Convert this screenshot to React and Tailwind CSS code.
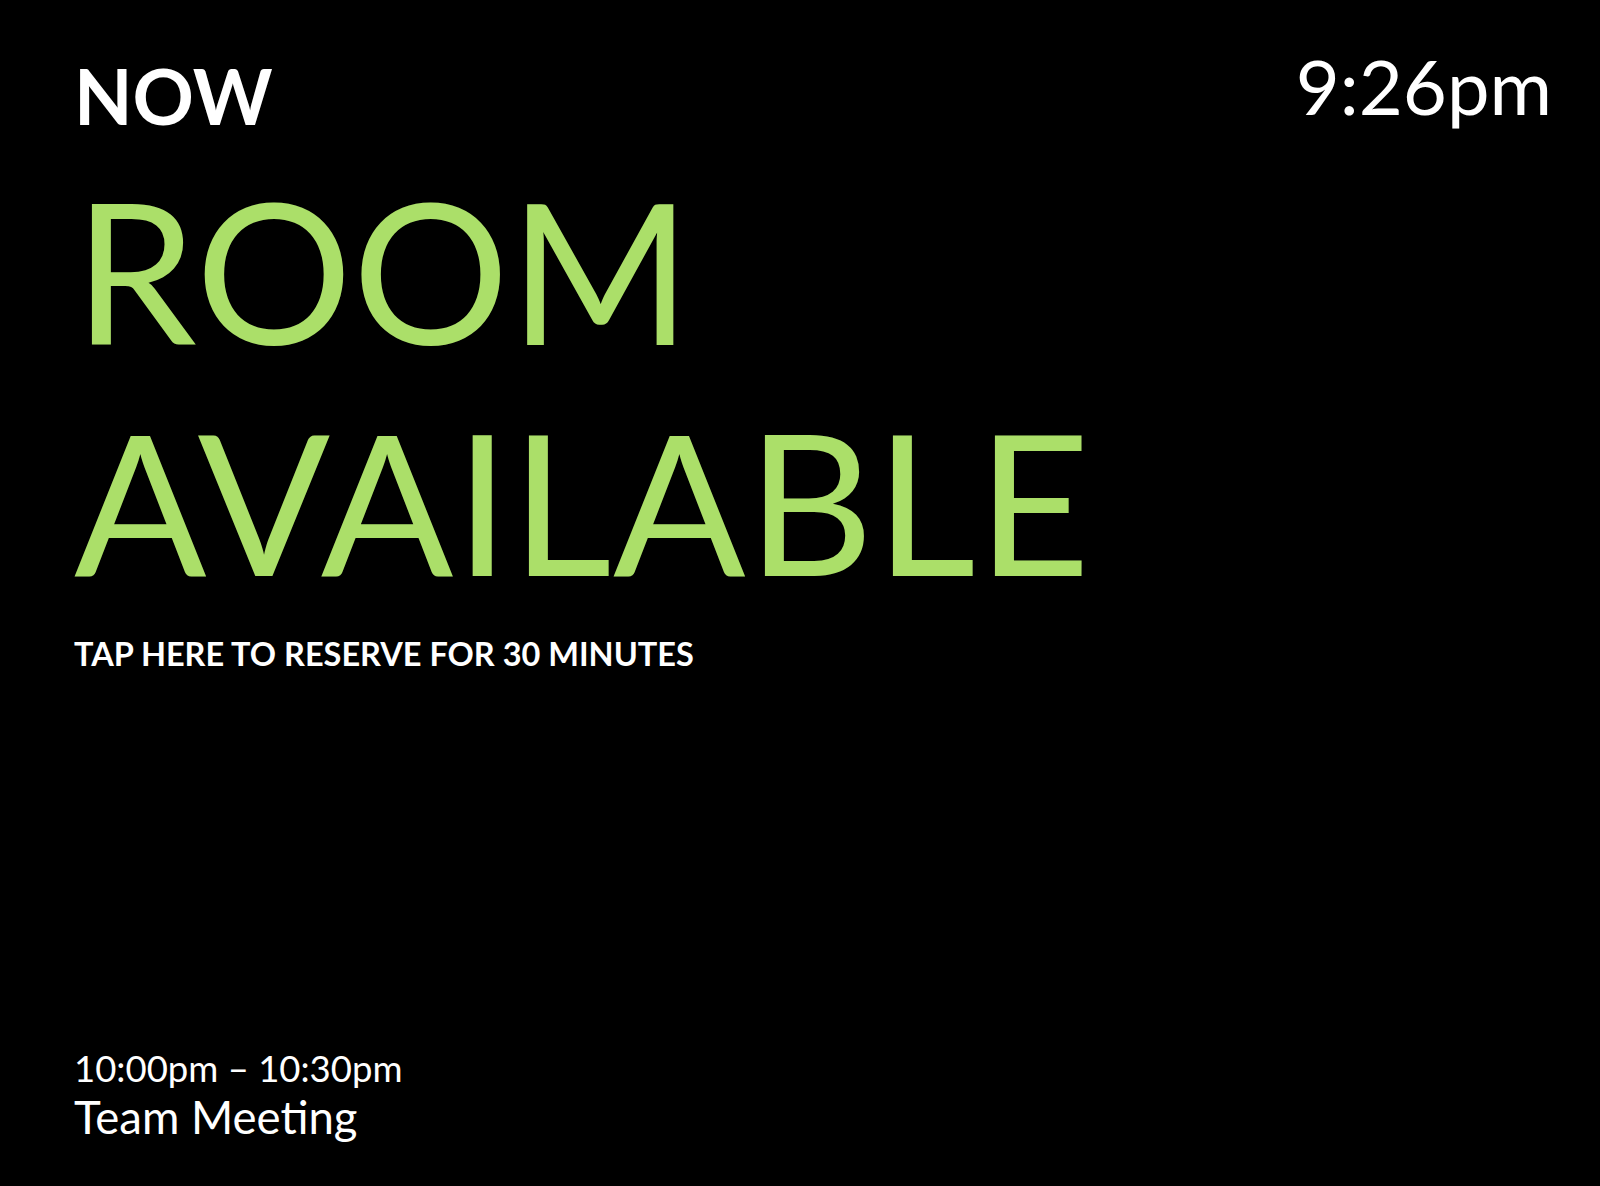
export default function App() {
  return (
    <div
      className="w-[1600px] h-[1186px] bg-black text-white flex flex-col pl-[74px] pr-[48px] pt-[48px] pb-[47px] overflow-hidden"
      style={{ fontFamily: "Lato, 'Noto Sans', sans-serif" }}
    >
      <div className="flex justify-between items-start">
        <div className="mt-[10px] text-[76px] font-bold leading-none">NOW</div>
        <div className="text-[76px] font-normal leading-none">9:26pm</div>
      </div>
      <div className="mt-[20px] text-[196px] leading-[231px] text-[#abdf69] font-normal">
        <div>ROOM</div>
        <div className="tracking-[1.3px]">AVAILABLE</div>
      </div>
      <div className="mt-[22px] text-[32.5px] font-bold leading-none">
        TAP HERE TO RESERVE FOR 30 MINUTES
      </div>
      <div className="mt-auto flex flex-col">
        <div className="text-[36.5px] leading-none">10:00pm – 10:30pm</div>
        <div className="mt-[7px] text-[45.5px] leading-none">Team Meeting</div>
      </div>
    </div>
  );
}
